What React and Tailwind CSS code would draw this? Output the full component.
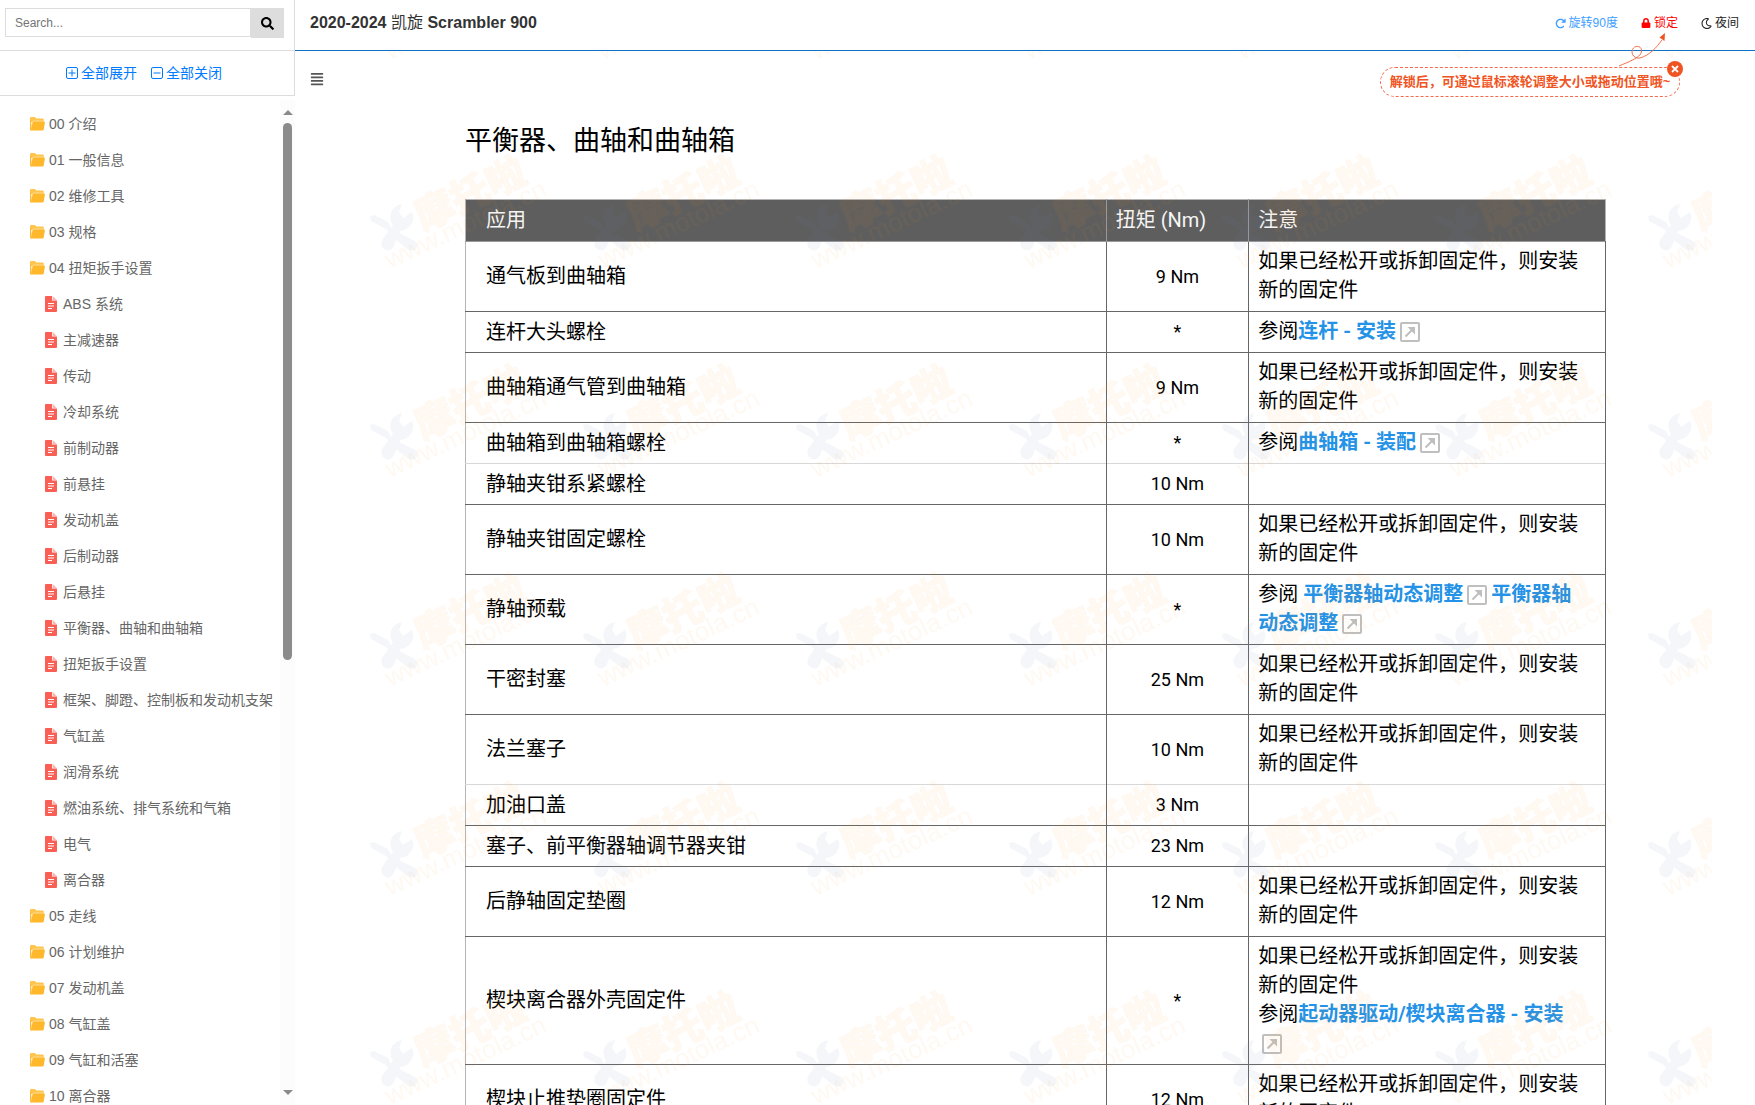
import React, { useState } from 'react';
import { FaSearch, FaAlignJustify, FaLock, FaRegMoon } from 'react-icons/fa';
import { FaArrowRotateRight } from 'react-icons/fa6';

const chapters = [
  { title: '00 介绍' },
  { title: '01 一般信息' },
  { title: '02 维修工具' },
  { title: '03 规格' },
  {
    title: '04 扭矩扳手设置',
    pages: [
      'ABS 系统', '主减速器', '传动', '冷却系统', '前制动器', '前悬挂', '发动机盖', '后制动器', '后悬挂',
      '平衡器、曲轴和曲轴箱', '扭矩扳手设置', '框架、脚蹬、控制板和发动机支架', '气缸盖', '润滑系统',
      '燃油系统、排气系统和气箱', '电气', '离合器',
    ],
  },
  { title: '05 走线' },
  { title: '06 计划维护' },
  { title: '07 发动机盖' },
  { title: '08 气缸盖' },
  { title: '09 气缸和活塞' },
  { title: '10 离合器' },
];

const REPLACE = '如果已经松开或拆卸固定件，则安装新的固定件';

const torques = [
  { name: '通气板到曲轴箱', value: '9 Nm', note: REPLACE },
  { name: '连杆大头螺栓', value: '*', links: ['连杆 - 安装'] },
  { name: '曲轴箱通气管到曲轴箱', value: '9 Nm', note: REPLACE },
  { name: '曲轴箱到曲轴箱螺栓', value: '*', links: ['曲轴箱 - 装配'], light: true },
  { name: '静轴夹钳系紧螺栓', value: '10 Nm' },
  { name: '静轴夹钳固定螺栓', value: '10 Nm', note: REPLACE },
  { name: '静轴预载', value: '*', links: ['平衡器轴动态调整', '平衡器轴动态调整'] },
  { name: '干密封塞', value: '25 Nm', note: REPLACE },
  { name: '法兰塞子', value: '10 Nm', note: REPLACE, light: true },
  { name: '加油口盖', value: '3 Nm' },
  { name: '塞子、前平衡器轴调节器夹钳', value: '23 Nm' },
  { name: '后静轴固定垫圈', value: '12 Nm', note: REPLACE },
  { name: '楔块离合器外壳固定件', value: '*', note: REPLACE, links: ['起动器驱动/楔块离合器 - 安装'] },
  { name: '楔块止推垫圈固定件', value: '12 Nm', note: REPLACE },
];

const FolderIcon = () => (
  <svg viewBox="0 0 15 14" className="w-[15px] h-3.5 shrink-0">
    <path d="M0 1.2Q0 0 1.2 0H4.800L6.400 1.600H12.6Q13.8 1.6 13.8 2.8V5H0Z" fill="#fdc44e" />
    <path d="M0 3V12Q0 13.500 1.2 13.500H2L1 4Z" fill="#fdb92e" />
    <path d="M2 12L3 4.200H13.800" stroke="#fff3d6" strokeWidth="0.8" fill="none" />
    <path d="M3.400 4.600H14.100Q15 4.600 14.9 5.500L13.7 12.500Q13.5 13.500 12.5 13.500H1.4Q.9 13.5 1.2 12.800L2.500 5.400Q2.700 4.600 3.400 4.600Z" fill="#ffb72b" />
  </svg>
);

const FileIcon = () => (
  <svg viewBox="0 0 12 16" className="w-3 h-4 shrink-0">
    <path d="M1 0H7V4.5H12V15Q12 16 11 16H1Q0 16 0 15V1Q0 0 1 0Z" fill="#f95f55" />
    <path d="M7.6 0L12 4.2H8.6Q7.6 4.2 7.6 3.2Z" fill="#fbb5b0" />
    <path d="M3 7.500H9M3 10H9M3 12.5H7" stroke="#fff" strokeWidth="1.1" />
  </svg>
);

const BoxIcon = ({ plus }) => (
  <svg viewBox="0 0 12 12" className="w-3 h-3" fill="none" stroke="currentColor">
    <rect x="0.5" y="0.5" width="11" height="11" rx="1.5" />
    <path d={plus ? 'M2.5 6H9.5M6 2.5V9.5' : 'M2.5 6H9.5'} />
  </svg>
);

const JumpIcon = () => (
  <svg viewBox="0 0 20 20" className="inline-block w-5 h-5 mx-1 align-[-4px]" fill="none" stroke="#bfbfbf">
    <rect x="1" y="1" width="18" height="18" rx="1" strokeWidth="2" />
    <path d="M5.5 14.5L13 7" strokeWidth="2" />
    <path d="M7.5 5H15V12.5Z" fill="#bfbfbf" stroke="none" />
  </svg>
);

// Repeating brand mark laid over the page
const Watermark = () => (
  <svg className="absolute top-0 left-[74px] h-full w-[92%] pointer-events-none" aria-hidden="true">
    <defs>
      <pattern id="mark" width="213" height="209" y="94" patternUnits="userSpaceOnUse">
        <g fill="#5b7a9d" opacity="0.07" transform="translate(0 11)">
          <path d="M1 60L5 59L19 66L22 72L30 77L46 85Q50 89 47 93Q43 96 38 93L27 84L17 73L2 65Z" />
          <path d="M22 57Q24 50 33 48L30 56L34 62L43 56Q47 65 39 72Q35 75 31 75L25 90Q21 97 15 93Q11 90 13 84L24 69Q20 63 22 57Z" />
        </g>
        <g fill="#f58a1f" opacity="0.06" fontFamily="'Noto Sans CJK SC', sans-serif">
          <text transform="translate(54 86) rotate(-25)" fontSize="39" fontWeight="900" stroke="#f58a1f">摩托啦</text>
          <text transform="translate(21 124) rotate(-25)" fontSize="26" fontFamily="'Liberation Sans', sans-serif">www.motola.cn</text>
        </g>
      </pattern>
    </defs>
    <rect width="100%" height="100%" fill="url(#mark)" />
  </svg>
);

const Note = ({ note, links }) => (
  <>
    {note && <p>{note}</p>}
    {links && (
      <p>
        参阅{links.length > 1 && ' '}
        {links.map((text, i) => (
          <React.Fragment key={i}>
            <a href="#" className="font-bold text-[#2492e6]">{text}</a>
            <JumpIcon />
          </React.Fragment>
        ))}
      </p>
    )}
  </>
);

const Sidebar = () => {
  const [open, setOpen] = useState(true);

  return (
    <aside className="w-[295px] shrink-0 flex flex-col text-sm">
      <div className="h-[51px] pt-2 pl-[5px] pr-[10px] flex items-start border-b border-r border-[#ddd]">
        <input type="text" aria-label="Search" placeholder="Search..." className="w-[247px] h-[29px] px-[9px] text-xs border border-[#ddd] outline-none placeholder:text-[#757575]" />
        <button aria-label="搜索" className="w-[33px] h-[30px] bg-[#ddd] text-black flex items-center justify-center">
          <FaSearch size={13} />
        </button>
      </div>
      <div className="h-[45px] pr-1.5 flex items-center justify-center gap-3.5 border-b border-r border-[#ddd] text-[#007bff]">
        <button onClick={() => setOpen(true)} className="flex items-center gap-[3px]"><BoxIcon plus />全部展开</button>
        <button onClick={() => setOpen(false)} className="flex items-center gap-[3px]"><BoxIcon />全部关闭</button>
      </div>
      <div className="flex-1 min-h-0 flex">
        <nav className="flex-1 min-w-0 pt-[10px] overflow-hidden text-[#666] whitespace-nowrap">
          <ul>
            {chapters.map(chapter => (
              <li key={chapter.title}>
                <a href="#" className="h-9 pl-[30px] flex items-center gap-1"><FolderIcon />{chapter.title}</a>
                {open && chapter.pages && (
                  <ul>
                    {chapter.pages.map(page => (
                      <li key={page}>
                        <a href="#" className="h-9 pl-[45px] flex items-center gap-1.5"><FileIcon />{page}</a>
                      </li>
                    ))}
                  </ul>
                )}
              </li>
            ))}
          </ul>
        </nav>
        {/* Scroll track */}
        <div className="w-[15px] mt-1 py-[10px] bg-[#fcfcfc] flex flex-col items-center">
          <svg viewBox="0 0 10 5" className="w-[10px] h-[5px]"><path d="M0 5L5 0L10 5Z" fill="#8b8b8b" /></svg>
          <div className="flex-1 w-[9px] py-2">
            <div className="h-[56%] bg-[#8b8b8b] rounded-full" />
          </div>
          <svg viewBox="0 0 10 5" className="w-[10px] h-[5px]"><path d="M0 0L5 5L10 0Z" fill="#8b8b8b" /></svg>
        </div>
      </div>
    </aside>
  );
};

const UnlockTip = ({ onClose }) => (
  <div className="absolute top-[67px] right-[75px] h-[30px] w-[300px] flex items-center justify-center rounded-full border border-dashed border-[#f5694a] text-[13px] font-bold text-[#f05423] whitespace-nowrap">
    解锁后，可通过鼠标滚轮调整大小或拖动位置哦~
    <svg viewBox="0 0 48 34" className="absolute right-[13px] bottom-[29px] w-12 h-[34px]" fill="none" stroke="#f2704c">
      <path d="M1 33C10 29 22 25 23.500 19C24.500 13 18 12 15.500 15C12 19 15 26 22 25C32 22 38 15 44 7" />
      <path d="M47 0L46.500 8L41.500 4.500Z" fill="#f05423" stroke="none" />
    </svg>
    <button onClick={onClose} aria-label="关闭" className="absolute -top-[7px] -right-1 w-4 h-4 rounded-full bg-[#f05423] text-white flex items-center justify-center">
      <svg viewBox="0 0 8 8" className="w-2 h-2" stroke="currentColor" strokeWidth="1.8"><path d="M1 1L7 7M7 1L1 7" /></svg>
    </button>
  </div>
);

const App = () => {
  const [tip, setTip] = useState(true);

  return (
    <div className="h-screen flex overflow-hidden bg-white font-['Liberation_Sans','Noto_Sans_CJK_SC',sans-serif]">
      <Sidebar />
      <main className="flex-1 min-w-0 relative flex flex-col">
        <header className="h-[51px] shrink-0 pl-[15px] pr-4 pb-1 flex items-center justify-between border-b border-[#1072c6]">
          <h1 className="text-base font-bold text-[#333]">2020-2024 <span className="font-normal">凯旋</span> Scrambler 900</h1>
          <div className="flex items-center gap-[23px] text-xs">
            <button className="flex items-center gap-[3px] text-[#409eff]"><FaArrowRotateRight size={11} />旋转90度</button>
            <button className="flex items-center gap-[3px] text-[#f00]"><FaLock size={10} />锁定</button>
            <button className="flex items-center gap-[3px] text-[#222]"><FaRegMoon size={11} />夜间</button>
          </div>
        </header>

        <div className="flex-1 min-h-0 relative overflow-hidden">
          <button aria-label="目录" className="absolute top-[21px] left-[15px] text-[#555]"><FaAlignJustify size={14} /></button>
          <article className="pl-[170px] pr-[149px] pt-[70px] text-black font-[Roboto,'Noto_Sans_CJK_SC',sans-serif]">
            <h2 className="text-[27px] leading-10">平衡器、曲轴和曲轴箱</h2>
            <table className="w-full mt-[38px] table-fixed border-collapse border border-[#b5b5b5] text-xl leading-[29px] text-left">
              <colgroup>
                <col className="w-[56.2%]" />
                <col className="w-[12.5%]" />
                <col />
              </colgroup>
              <thead>
                <tr className="h-[42px] bg-[#5e5e5e] text-[#f5f5f5] border-b border-[#999]">
                  <th className="pl-5 font-normal">应用</th>
                  <th className="px-[9px] font-normal border-x border-[#999]">扭矩 (Nm)</th>
                  <th className="px-[9px] font-normal">注意</th>
                </tr>
              </thead>
              <tbody>
                {torques.map(row => (
                  <tr key={row.name} className={`h-[41px] border-b ${row.light ? 'border-[#d8d8d8]' : 'border-[#666]'}`}>
                    <td className="pl-5">{row.name}</td>
                    <td className="text-center text-lg border-x border-x-[#666]">{row.value}</td>
                    <td className="pl-[9px] pr-5 pt-[5px] pb-1.5 border-r border-r-[#666]"><Note note={row.note} links={row.links} /></td>
                  </tr>
                ))}
              </tbody>
            </table>
          </article>
          <Watermark />
        </div>

        {tip && <UnlockTip onClose={() => setTip(false)} />}
      </main>
    </div>
  );
};

export default App;
